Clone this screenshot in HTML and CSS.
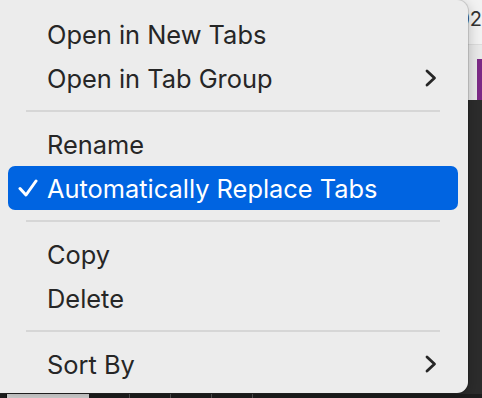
FILE: index.html
```html
<!DOCTYPE html>
<html lang="en">
  <head>
    <meta charset="UTF-8" />
    <meta name="viewport" content="width=device-width, initial-scale=1.0" />
    <title>Tab Group Menu</title>
    <link rel="stylesheet" href="styles.css">
  </head>
  <body>
    <div class="desktop">
      <div class="titlebar"><span class="date">202</span></div>
      <div class="toolbar"><span class="tag"></span></div>
      <div class="content"></div>
      <div class="statusbar">
        <span class="status-tab"></span>
        <span class="tick"></span>
        <span class="tick"></span>
        <span class="tick"></span>
        <span class="tick"></span>
      </div>
    </div>

    <!-- context menu over the window -->
    <div class="menu">
      <div class="item"><span class="mark"></span><span class="label">Open in New Tabs</span></div>
      <div class="item">
        <span class="mark"></span><span class="label">Open in Tab Group</span>
        <svg class="chevron" width="12" height="18" viewBox="0 0 12 18"><polyline points="2,2 9.5,9 2,16" /></svg>
      </div>
      <div class="separator"></div>
      <div class="item"><span class="mark"></span><span class="label">Rename</span></div>
      <div class="item active">
        <span class="mark">
          <svg width="20" height="18" viewBox="0 0 20 18"><polyline points="2,9.5 8,16 18,2" /></svg>
        </span>
        <span class="label">Automatically Replace Tabs</span>
      </div>
      <div class="separator"></div>
      <div class="item"><span class="mark"></span><span class="label">Copy</span></div>
      <div class="item"><span class="mark"></span><span class="label">Delete</span></div>
      <div class="separator"></div>
      <div class="item">
        <span class="mark"></span><span class="label">Sort By</span>
        <svg class="chevron" width="12" height="18" viewBox="0 0 12 18"><polyline points="2,2 9.5,9 2,16" /></svg>
      </div>
    </div>
  </body>
</html>
```

FILE: styles.css
```css
body {
  margin: 0;
  font-family: Inter, "Noto Sans", sans-serif;
  overflow: hidden;
}

.desktop {
  position: relative;
  width: 482px;
  height: 398px;
  display: flex;
  flex-direction: column;
  background: #2c2c2c;
}

.titlebar {
  height: 44px;
  background: #f2f2f2;
  border-bottom: 1px solid #dcdcdc;
  display: flex;
  justify-content: flex-end;
  overflow: hidden;
}

.date {
  font-size: 20px;
  color: #333;
  margin-top: 7px;
  margin-right: 0;
}

.toolbar {
  height: 55px;
  background: #e9e9e9;
  display: flex;
  justify-content: flex-end;
  align-items: flex-end;
}

.tag {
  width: 5px;
  height: 41px;
  background: #7c2a86;
}

.content {
  flex: 1;
  background: #2c2c2c;
}

.statusbar {
  height: 4px;
  display: flex;
  background: #1e1e1e;
}

.status-tab {
  width: 82px;
  margin-left: 6px;
  background: #dedede;
  border-left: 1px solid #111;
}

.tick {
  width: 1px;
  margin-left: 40px;
  background: #555;
}

.menu {
  position: absolute;
  top: 0;
  left: 0;
  width: 468px;
  height: 393px;
  box-sizing: border-box;
  padding: 12px 0 7px;
  background: #ececec;
  border-radius: 0 11px 11px 0;
  box-shadow: 0 0 0 1px rgba(0, 0, 0, 0.12), 0 4px 14px rgba(0, 0, 0, 0.25);
  font-size: 25.4px;
  color: #262626;
}

.item {
  display: flex;
  align-items: center;
  height: 44px;
  margin: 0 10px 0 8px;
  padding-right: 21px;
  border-radius: 7px;
}

.item.active {
  background: #0064e1;
  color: #fff;
}

.mark {
  width: 39px;
  flex-shrink: 0;
  display: flex;
  align-items: center;
  padding-left: 10px;
  box-sizing: border-box;
}

.mark svg polyline {
  fill: none;
  stroke: #fff;
  stroke-width: 3;
  stroke-linecap: round;
  stroke-linejoin: round;
}

.label {
  flex: 1;
  white-space: nowrap;
}

.chevron polyline {
  fill: none;
  stroke: #262626;
  stroke-width: 2.8;
  stroke-linecap: round;
  stroke-linejoin: round;
}

.separator {
  height: 2px;
  margin: 10px 28px 10px 26px;
  background: #d6d6d6;
}
```
